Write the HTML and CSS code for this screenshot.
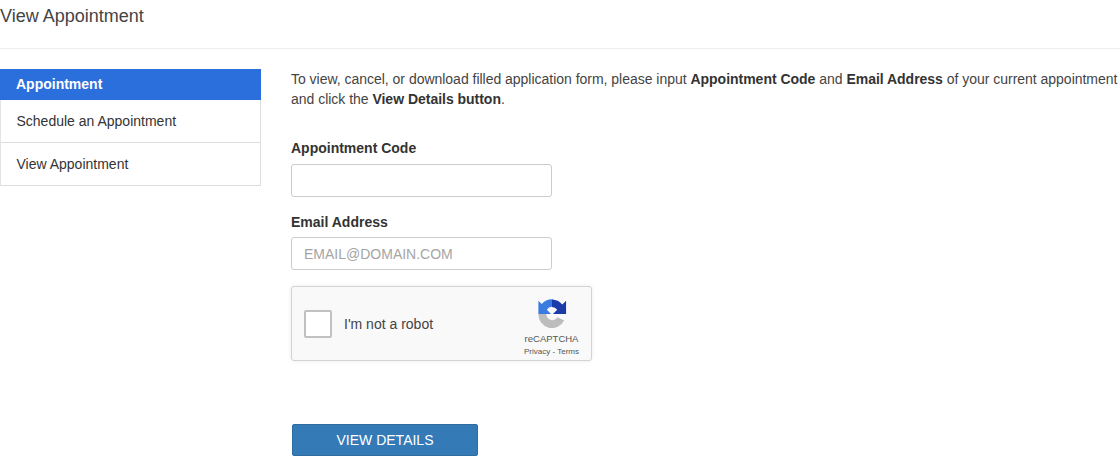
FILE: index.html
```html
<!DOCTYPE html>
<html lang="en">
<head>
    <meta charset="UTF-8">
    <title>View Appointment</title>
    <link rel="stylesheet" href="styles.css">
</head>
<body>
    <header class="page-header">View Appointment</header>

    <div class="layout">
        <nav class="side-menu">
            <div class="side-title">Appointment</div>
            <a class="side-link" href="#">Schedule an Appointment</a>
            <a class="side-link" href="#">View Appointment</a>
        </nav>

        <main class="content">
            <p class="intro">To view, cancel, or download filled application form, please input <b>Appointment Code</b> and <b>Email Address</b> of your current appointment and click the <b>View Details button</b>.</p>

            <form>
                <div class="form-group">
                    <label for="code">Appointment Code</label>
                    <input type="text" id="code">
                </div>
                <div class="form-group">
                    <label for="email">Email Address</label>
                    <input type="text" id="email" placeholder="EMAIL@DOMAIN.COM">
                </div>

                <div class="captcha">
                    <span class="captcha-box"></span>
                    <span class="captcha-text">I'm not a robot</span>
                    <div class="captcha-brand">
                        <svg class="captcha-logo" viewBox="0 0 32 32" width="30" height="30">
                            <path d="M1.500 17H10A6.500 6.500 0 0 0 22 20.500L29 24A14.500 14.500 0 0 1 1.500 17z" fill="#bdbdbd"/>
                            <path d="M17 1.500A14.500 14.500 0 0 0 5 6.500L1.500 3V17H15L10.500 12.500A6.500 6.500 0 0 1 17 9.500z" fill="#3a7be0"/>
                            <path d="M16 1.500A14.500 14.500 0 0 1 27 7L31 3V17H17L21.500 12.500A6.500 6.500 0 0 0 16 9.500z" fill="#1c3aa9"/>
                        </svg>
                        <span class="captcha-name">reCAPTCHA</span>
                        <span class="captcha-links">Privacy - Terms</span>
                    </div>
                </div>

                <button type="button" class="btn-details">VIEW DETAILS</button>
            </form>
        </main>
    </div>
</body>
</html>
```

FILE: styles.css
```css
html, body {
    height: 458px;
    overflow: hidden;
}
body {
    margin: 0;
    background: #fff;
    font-family: 'Liberation Sans', Arial, sans-serif;
    font-size: 14px;
    color: #333;
}
.page-header {
    height: 49px;
    box-sizing: border-box;
    padding-top: 6px;
    border-bottom: 1px solid #eee;
    font-size: 18px;
    line-height: 20px;
    color: #444;
}
.layout {
    display: flex;
    padding-top: 20px;
}
.side-menu {
    width: 261px;
    flex: none;
    align-self: flex-start;
    box-sizing: border-box;
    border: 1px solid #ddd;
    border-top: none;
    border-left-color: #e4e4e4;
}
.side-title {
    height: 31px;
    margin: 0 -1px;
    padding-left: 16px;
    background: #2a6fdb;
    color: #fff;
    font-weight: bold;
    line-height: 31px;
}
.side-link {
    display: block;
    height: 42px;
    padding-left: 15.500px;
    line-height: 43px;
    color: #333;
    text-decoration: none;
}
.side-link + .side-link {
    border-top: 1px solid #ddd;
}
.content {
    margin-left: 30px;
    flex: 1;
    min-width: 0;
}
.intro {
    margin: 0;
    width: 829px;
    line-height: 20px;
    letter-spacing: -0.020px;
    color: #444;
}
.intro b {
    color: #333;
}
form {
    padding-top: 29px;
}
label {
    display: block;
    font-weight: bold;
    line-height: 20px;
    margin-bottom: 6px;
    color: #333;
}
input {
    display: block;
    width: 261px;
    height: 33px;
    box-sizing: border-box;
    padding: 0 12px;
    border: 1px solid #ccc;
    border-radius: 3px;
    font-family: inherit;
    font-size: 14px;
    margin-bottom: 15px;
}
.form-group + .form-group label {
    margin-bottom: 5px;
}
.form-group + .form-group input {
    margin-bottom: 16px;
}
input::placeholder {
    color: #a5a5a5;
}
.captcha {
    display: flex;
    align-items: center;
    width: 301px;
    height: 75px;
    box-sizing: border-box;
    padding: 0 12px;
    background: #f9f9f9;
    border: 1px solid #d3d3d3;
    border-radius: 3px;
    box-shadow: 0 0 4px rgba(0,0,0,0.08);
}
.captcha-box {
    width: 24px;
    height: 24px;
    flex: none;
    background: #fff;
    border: 2px solid #c1c1c1;
    border-radius: 2px;
}
.captcha-text {
    margin-left: 12px;
    color: #444;
}
.captcha-brand {
    margin-left: auto;
    display: flex;
    flex-direction: column;
    align-items: center;
    color: #555;
}
.captcha-logo {
    display: block;
    margin-top: 8px;
}
.captcha-name {
    font-size: 9.500px;
    line-height: 12px;
    margin-top: 5px;
}
.captcha-links {
    font-size: 8px;
    line-height: 12px;
    margin-top: 1px;
}
.btn-details {
    display: block;
    width: 186px;
    height: 32px;
    margin-top: 63px;
    margin-left: 1px;
    background: #337ab7;
    border: 1px solid #2e6da4;
    border-radius: 2px;
    color: #fff;
    font-family: inherit;
    font-size: 14px;
}
```
